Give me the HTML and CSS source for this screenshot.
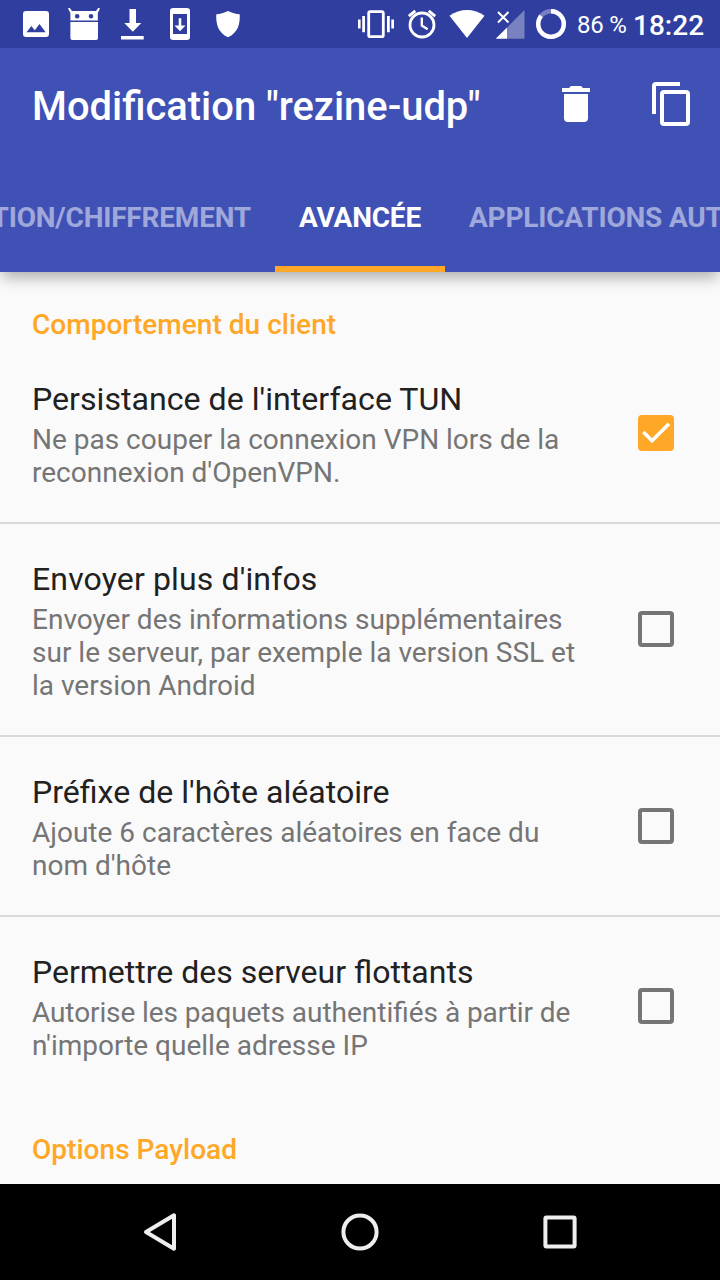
FILE: index.html
```html
<!DOCTYPE html>
<html lang="fr">
<head>
<meta charset="utf-8">
<title>Modification "rezine-udp"</title>
<link rel="stylesheet" href="styles.css">
</head>
<body>
<div class="screen">
  <header class="appbar">
    <div class="status">
      <div class="notifications">
        <svg width="48" height="48" viewBox="12 0 48 48"><path fill="#fff" fill-rule="evenodd" d="M26 11H46a3 3 0 0 1 3 3V34a3 3 0 0 1-3 3H26a3 3 0 0 1-3-3V14a3 3 0 0 1 3-3ZM26.5 32.3H45.7L39.5 24 34.8 30.2 31.4 26Z"/></svg>
        <svg width="48" height="48" viewBox="60 0 48 48"><path fill="#fff" fill-rule="evenodd" d="M68 8.6 69.6 7.8 72 11H96L98.4 7.8 100 8.6 97.8 13V20.6H70.4V13ZM79.5 16.2a2.3 2.3 0 1 0-4.6 0a2.3 2.3 0 0 0 4.6 0ZM93.3 16.2a2.3 2.3 0 1 0-4.6 0a2.3 2.3 0 0 0 4.6 0ZM70.4 22H98V38a2 2 0 0 1-2 2H72.4a2 2 0 0 1-2-2Z"/></svg>
        <svg width="48" height="48" viewBox="108 0 48 48"><path fill="#fff" d="M129.5 9H136V23H141.3L132.8 31.8 124.3 23H129.5ZM121 36H143.7V39.4H121Z"/></svg>
        <svg width="48" height="48" viewBox="156 0 48 48"><path fill="#fff" fill-rule="evenodd" d="M173 8H187a3 3 0 0 1 3 3V37a3 3 0 0 1-3 3H173a3 3 0 0 1-3-3V11a3 3 0 0 1 3-3ZM173 14V34H187V14ZM178.7 18.3H181.3V25.5H185.5L180 31.3 174.5 25.5H178.7Z"/></svg>
        <svg width="48" height="48" viewBox="204 0 48 48"><path fill="#fff" d="M228 11C232 13 236 14 239.7 14.2 240.2 24 238 32.5 228 37.3 218 32.5 215.8 24 216.3 14.2 220 14 224 13 228 11Z"/></svg>
      </div>
      <div class="indicators">
        <svg width="48" height="48" viewBox="352 0 48 48"><rect x="368.7" y="11.7" width="14.6" height="25" rx="1.5" fill="none" stroke="#fff" stroke-width="2.8"/><path fill="#fff" d="M358 19.5h2.6v9H358ZM362.2 16h2.8v16.3h-2.8ZM387 16h2.8v16.3H387ZM391.3 19.5h2.7v9h-2.7Z"/></svg>
        <svg width="44" height="48" viewBox="400 0 44 48"><g fill="none" stroke="#fff" stroke-width="2.8"><circle cx="422" cy="25" r="12"/><path stroke-width="2.3" d="M421.8 17.5V25.5L427.7 29.3"/><path d="M408.8 16.2 415.3 10.8M428.7 10.8 435.2 16.2"/></g></svg>
        <svg width="46" height="48" viewBox="444 0 46 48"><path fill="#fff" d="M449.5 15.7C460 8.2 474 8.2 484.5 15.7L467 38Z"/></svg>
        <svg width="40" height="48" viewBox="490 0 40 48"><path fill="#fff" fill-opacity=".35" d="M507 27.4 524.5 10V38.7H507Z"/><path fill="#fff" d="M495.7 38.7 507 27.4V38.7Z"/><path stroke="#fff" stroke-width="2" d="M498 12 508.5 22.5M508.5 12 498 22.5"/></svg>
        <svg width="42" height="48" viewBox="530 0 42 48"><g fill="none" stroke="#fff" stroke-width="4.4"><circle cx="551" cy="24" r="12.8" stroke-opacity=".35"/><path d="M551 11.2A12.8 12.8 0 1 1 541.1 15.9"/></g></svg>
        <span class="battery">86 %</span>
        <span class="clock">18:22</span>
      </div>
    </div>
    <div class="toolbar">
      <h1 class="title">Modification "rezine-udp"</h1>
      <div class="actions">
        <svg width="96" height="112" viewBox="528 48 96 112"><path fill="#fff" d="M562 88H569L571 86H581L583 88H590V92H562ZM564 94H588V118a4 4 0 0 1-4 4H568a4 4 0 0 1-4-4Z"/></svg>
        <svg width="96" height="112" viewBox="624 48 96 112"><g fill="none" stroke="#fff" stroke-width="4"><path d="M680 84H656a2 2 0 0 0-2 2V114"/><rect x="662" y="92" width="26" height="32" rx="2"/></g></svg>
      </div>
    </div>
    <nav class="tabs">
      <div class="tab tab-before">TION/CHIFFREMENT</div>
      <div class="tab tab-active">AVANCÉE</div>
      <div class="tab tab-after">APPLICATIONS AUT</div>
    </nav>
  </header>

  <main class="settings">
    <h2 class="category">Comportement du client</h2>
    <section class="row persist">
      <div class="text">
        <div class="name">Persistance de l'interface TUN</div>
        <div class="summary">Ne pas couper la connexion VPN lors de la<br>reconnexion d'OpenVPN.</div>
      </div>
      <div class="checkbox checked"><svg width="36" height="36" viewBox="0 0 36 36"><path fill="none" stroke="#fff" stroke-width="3.6" d="M5.3 17 14 25.8 31 8.8"/></svg></div>
    </section>
    <section class="row ruled peer-info">
      <div class="text">
        <div class="name">Envoyer plus d'infos</div>
        <div class="summary">Envoyer des informations supplémentaires<br>sur le serveur, par exemple la version SSL et<br>la version Android</div>
      </div>
      <div class="checkbox"></div>
    </section>
    <section class="row ruled host-prefix">
      <div class="text">
        <div class="name">Préfixe de l'hôte aléatoire</div>
        <div class="summary">Ajoute 6 caractères aléatoires en face du<br>nom d'hôte</div>
      </div>
      <div class="checkbox"></div>
    </section>
    <section class="row ruled floating">
      <div class="text">
        <div class="name">Permettre des serveur flottants</div>
        <div class="summary"><span class="snug">Autorise les paquets</span> authentifiés <span class="snug">à partir de</span><br>n'importe quelle adresse IP</div>
      </div>
      <div class="checkbox"></div>
    </section>
    <h2 class="category">Options Payload</h2>
  </main>

  <footer class="navbar">
    <svg width="200" height="96" viewBox="60 1184 200 96"><path fill="none" stroke="#eee" stroke-width="4" stroke-linejoin="round" d="M146 1232 174 1215.3V1248.7Z"/></svg>
    <svg width="200" height="96" viewBox="260 1184 200 96"><circle cx="360" cy="1232" r="16.6" fill="none" stroke="#eee" stroke-width="4"/></svg>
    <svg width="200" height="96" viewBox="460 1184 200 96"><rect x="545.4" y="1217.4" width="29.2" height="29.2" rx="1" fill="none" stroke="#eee" stroke-width="4"/></svg>
  </footer>
</div>
</body>
</html>
```
FILE: styles.css
```css
* { box-sizing: border-box; }

body {
  margin: 0;
  font-family: Roboto, "Noto Sans", sans-serif;
}

svg { display: block; flex: none; }

.screen {
  display: flex;
  flex-direction: column;
  width: 720px;
  height: 1280px;
  overflow: hidden;
  background: #fafafa;
}

.appbar {
  position: relative;
  z-index: 1;
  flex: none;
  background: #3f51b5;
  color: #fff;
  box-shadow: 0 7px 15px -2px rgba(0, 0, 0, .33);
}

.status {
  display: flex;
  justify-content: space-between;
  height: 48px;
  padding: 0 16px 0 12px;
  background: #303f9f;
}

.notifications,
.indicators { display: flex; }

.indicators { width: 352px; }

.battery,
.clock {
  flex: none;
  white-space: nowrap;
}

.battery {
  width: 57px;
  padding-left: 5px;
  font-size: 24px;
  line-height: 51px;
  letter-spacing: -.2px;
}

.clock {
  padding-left: 4px;
  font-size: 28px;
  font-weight: 500;
  line-height: 52px;
}

.toolbar {
  display: flex;
  justify-content: space-between;
  height: 112px;
  padding-left: 32px;
}

.title {
  margin: 0;
  font-size: 39.9px;
  font-weight: 500;
  line-height: 118px;
  white-space: nowrap;
}

.actions { display: flex; }

.tabs {
  display: grid;
  grid-template-columns: 275px 170px 275px;
  height: 112px;
  overflow: hidden;
}

.tab {
  display: flex;
  padding: 41px 24px 0;
  overflow: hidden;
  font-size: 28px;
  font-weight: 700;
  line-height: 33px;
  letter-spacing: -.2px;
  white-space: nowrap;
  color: rgba(255, 255, 255, .5);
}

.tab-before { justify-content: flex-end; }

.tab-active {
  justify-content: center;
  border-bottom: 6px solid #ffa726;
  color: #fff;
}

.tab-after { padding-right: 0; }

.settings {
  flex: 1;
  min-height: 0;
  overflow: hidden;
}

.category {
  height: 72px;
  margin: 0;
  padding: 36px 32px 0;
  font-size: 28px;
  font-weight: 500;
  line-height: 33px;
  letter-spacing: .03px;
  color: #ffa726;
}

.row {
  display: flex;
  align-items: center;
  justify-content: space-between;
  padding: 36px 46px 33px 32px;
}

.row.ruled { border-top: 2px solid #dadada; }

.row.floating { padding-bottom: 35px; }

.name {
  margin-bottom: 5px;
  font-size: 32px;
  line-height: 38px;
  color: #212121;
}

.persist .name { font-size: 32.15px; }
.peer-info .name { letter-spacing: .14px; }
.host-prefix .name { font-size: 32.1px; }

.summary {
  font-size: 28px;
  line-height: 33px;
  color: #757575;
  white-space: nowrap;
}

.snug { letter-spacing: -.1px; }

.checkbox {
  flex: none;
  width: 36px;
  height: 36px;
  margin-top: -3px;
  border: 4px solid #757575;
  border-radius: 4px;
}

.peer-info .checkbox { margin-top: -5px; }

.checkbox.checked {
  border: 0;
  background: #ffa726;
}

.navbar {
  display: flex;
  justify-content: center;
  flex: none;
  height: 96px;
  background: #000;
}
```
